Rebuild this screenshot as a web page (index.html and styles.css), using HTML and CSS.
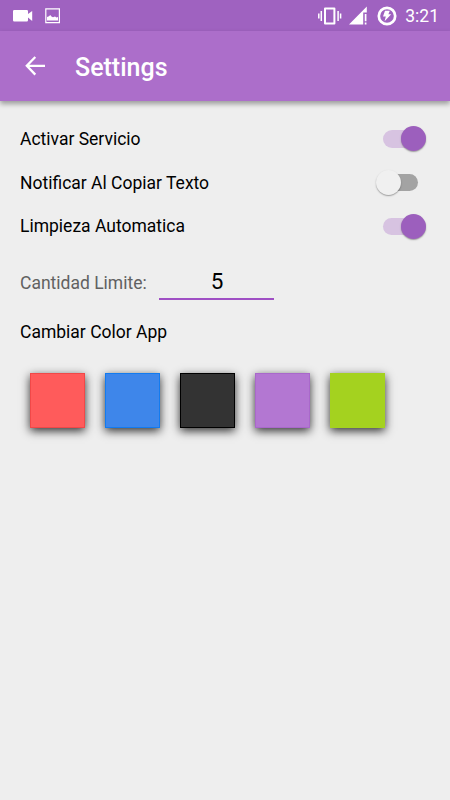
FILE: index.html
```html
<!DOCTYPE html>
<html lang="es">
<head>
    <meta charset="UTF-8">
    <meta name="viewport" content="width=device-width, initial-scale=1.0">
    <title>Settings</title>
    <link rel="stylesheet" href="styles.css">
</head>
<body>
    <div class="status-bar">
        <div class="notifications">
            <svg class="icon-video" width="20" height="12" viewBox="0 0 20 12"><path d="M1.2 0h12.6q1.2 0 1.2 1.2v2.9L19.2 1v10L15 7.4v2.9q0 1.2-1.2 1.2H1.2Q0 11.500 0 10.300V1.200Q0 0 1.200 0z" fill="#fff"/></svg>
            <svg width="16" height="16" viewBox="0 0 16 16"><path d="M.8.8h13.600v13.800H.8z" fill="none" stroke="#fff" stroke-width="1.200"/><path d="M2 12.600V9l2-.8 1.200-1.200 1.300 1.500 1.500.7 2-.7 1.500 1 1.500-.4v3.500z" fill="#fff"/></svg>
        </div>
        <div class="system">
            <svg class="icon-vibrate" width="24" height="18" viewBox="0 0 24 18"><path d="M7 1.500h9.400v15H7z" fill="none" stroke="#fff" stroke-width="2" stroke-linejoin="round"/><path d="M.8 6.500v5M3.300 4v10M20.100 4v10M22.600 6.500v5" stroke="#fff" stroke-width="1.500"/></svg>
            <svg class="icon-signal" width="19" height="19" viewBox="0 0 19 19"><path d="M0 18.500 17.800.5v6h-3.600v12z" fill="#fff"/><path d="M16.600 8v7.200M16.600 16.500v2" stroke="#fff" stroke-width="1.700"/></svg>
            <svg class="icon-battery" width="20" height="20" viewBox="0 0 20 20"><circle cx="10" cy="10" r="8.200" fill="none" stroke="#fff" stroke-width="2.700"/><path d="M8 4.800h4.800l-1.400 3.400h2.800l-6.600 7 1.200-4.600H6z" fill="#fff"/></svg>
            <span class="clock">3:21</span>
        </div>
    </div>

    <header class="toolbar">
        <svg class="back" width="20" height="20" viewBox="0 0 20 20"><path d="M10.300 1 1.800 9.800l8.500 8.800M1.800 9.800H20" fill="none" stroke="#fff" stroke-width="2.300"/></svg>
        <h1>Settings</h1>
    </header>

    <main class="settings">
        <ul class="options">
            <li>
                <span>Activar Servicio</span>
                <div class="switch on"><div class="thumb"></div></div>
            </li>
            <li>
                <span>Notificar Al Copiar Texto</span>
                <div class="switch"><div class="thumb"></div></div>
            </li>
            <li>
                <span>Limpieza Automatica</span>
                <div class="switch on"><div class="thumb"></div></div>
            </li>
        </ul>
        <div class="limit">
            <label for="limit">Cantidad Limite:</label>
            <input type="text" id="limit" value="5">
        </div>
        <h2>Cambiar Color App</h2>
        <div class="colors">
            <div class="color red"></div>
            <div class="color blue"></div>
            <div class="color black"></div>
            <div class="color purple"></div>
            <div class="color green"></div>
        </div>
    </main>
</body>
</html>
```

FILE: styles.css
```css
* {margin: 0; padding: 0; box-sizing: border-box;}
body {height: 800px; background-color: #eeeeee; color: #000000; font-family: Roboto, sans-serif; font-size: 17.5px; overflow: hidden;}
li {list-style-type: none;}
svg {display: block; flex: none;}

.status-bar {height: 31px; padding: 0 11px 0 13px; background-color: #9f62c0; color: #ffffff; display: flex; justify-content: space-between; align-items: center;}
.notifications {display: flex; align-items: center; gap: 12px;}
.system {display: flex; align-items: center;}
.icon-signal {margin-left: 7px;}
.icon-battery {margin-left: 9px;}
.clock {margin-left: 8px; font-size: 17.5px; line-height: 31px; padding-top: 2px;}

.toolbar {height: 70px; padding-left: 25px; background-color: #ac6eca; color: #ffffff; display: flex; align-items: center; gap: 30px; box-shadow: 0 3px 5px rgba(0, 0, 0, 0.35);}
.toolbar h1 {font-size: 25px; font-weight: 500; line-height: 30px; padding-top: 4px;}

.settings {padding: 16px 20px 0;}
.options li {height: 43.75px; padding-right: 12px; display: flex; justify-content: space-between; align-items: center;}

.switch {width: 35px; height: 17.5px; border-radius: 9px; background-color: #a3a3a3; display: flex; align-items: center;}
.switch .thumb {flex: none; width: 25px; height: 25px; margin-left: -7px; border-radius: 50%; background-color: #f0f0f0; box-shadow: 0 1px 1.5px rgba(0, 0, 0, 0.35);}
.switch.on {background-color: #d7c3e1;}
.switch.on .thumb {margin-left: 17.5px; background-color: #9c5fbd;}

.limit {height: 51px; margin-top: 0.75px; display: flex; align-items: flex-end; gap: 12px;}
.limit label {width: 127px; color: #616161; line-height: 21px; padding-bottom: 6px; white-space: nowrap;}
.limit input {width: 115px; height: 36px; padding: 0 0 1px 1px; border: none; border-bottom: 2px solid #9f4fc4; background-color: transparent; font-family: inherit; font-size: 22.5px; text-align: center; outline: none;}

.settings h2 {margin-top: 22px; font-size: 17.5px; font-weight: 400; line-height: 21px;}

.colors {padding: 30px 10px 0; display: flex; gap: 20px;}
.color {width: 55px; height: 55px; border: 1px solid; box-shadow: 0 3px 9px rgba(0, 0, 0, 0.8);}
.red {background-color: #ff5b5b; border-color: #f14848;}
.blue {background-color: #3e86ea; border-color: #127bf0;}
.black {background-color: #333333; border-color: #000000;}
.purple {background-color: #b377d2; border-color: #a968cb;}
.green {background-color: #a4d21f; border-color: #a4d21f;}
```
